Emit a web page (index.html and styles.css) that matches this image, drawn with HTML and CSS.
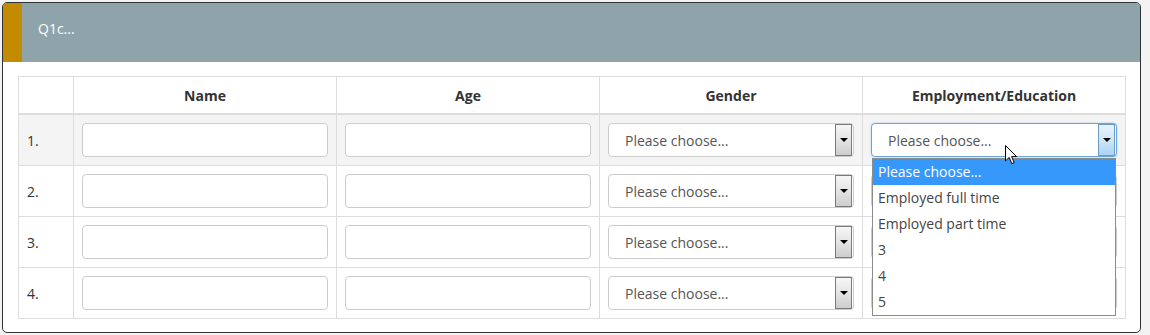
FILE: index.html
```html
<!doctype html>
<html>
 <head>
  <link rel="stylesheet" href="styles.css">
 </head>
 <body>
  <div class="panel">
   <div class="panel-head">
    <div class="stripe"></div>
    <div class="title">Q1c...</div>
   </div>
   <div class="panel-body">
    <table class="grid">
     <thead>
      <tr>
       <th class="num"></th>
       <th>Name</th>
       <th>Age</th>
       <th>Gender</th>
       <th>Employment/Education</th>
      </tr>
     </thead>
     <tbody>
      <tr class="odd">
       <td class="num">1.</td>
       <td><div class="field"></div></td>
       <td><div class="field"></div></td>
       <td><div class="pick"><span>Please choose...</span><i class="arrow"></i></div></td>
       <td class="open-cell">
        <div class="pick focus"><span>Please choose...</span><i class="arrow"></i></div>
        <ul class="menu">
         <li class="on">Please choose...</li>
         <li>Employed full time</li>
         <li>Employed part time</li>
         <li>3</li>
         <li>4</li>
         <li>5</li>
        </ul>
        <svg class="cursor" width="13" height="20" viewBox="0 0 13 20"><path d="M0.5 0.5 L0.5 16 L4.2 12.4 L6.8 18.6 L9.2 17.6 L6.6 11.6 L11.6 11.6 Z" fill="#fff" stroke="#000" stroke-width="1"/></svg>
       </td>
      </tr>
      <tr>
       <td class="num">2.</td>
       <td><div class="field"></div></td>
       <td><div class="field"></div></td>
       <td><div class="pick"><span>Please choose...</span><i class="arrow"></i></div></td>
       <td><div class="pick"><span>Please choose...</span><i class="arrow"></i></div></td>
      </tr>
      <tr>
       <td class="num">3.</td>
       <td><div class="field"></div></td>
       <td><div class="field"></div></td>
       <td><div class="pick"><span>Please choose...</span><i class="arrow"></i></div></td>
       <td><div class="pick"><span>Please choose...</span><i class="arrow"></i></div></td>
      </tr>
      <tr>
       <td class="num">4.</td>
       <td><div class="field"></div></td>
       <td><div class="field"></div></td>
       <td><div class="pick"><span>Please choose...</span><i class="arrow"></i></div></td>
       <td><div class="pick"><span>Please choose...</span><i class="arrow"></i></div></td>
      </tr>
     </tbody>
    </table>
   </div>
  </div>
 </body>
</html>
```
FILE: styles.css
```css
body {
    margin: 0;
    padding: 2px;
    background-color: #f3f3f3;
    font-family: "Open Sans", "DejaVu Sans", sans-serif;
    font-size: 14px;
    color: #333;
}
.panel {
    width: 1139px;
    height: 331px;
    box-sizing: border-box;
    border: 1px solid #2f3336;
    border-radius: 5px;
    background-color: #fff;
    overflow: hidden;
}
.panel-head {
    display: flex;
    height: 59px;
    background-color: #8fa3aa;
}
.stripe {
    width: 19px;
    background-color: #c38c00;
}
.title {
    padding: 16px 0 0 16px;
    color: #fff;
    font-size: 14px;
}
.panel-body {
    padding: 14px 14px 0 15px;
}
.grid {
    border-collapse: collapse;
    width: 1108px;
    table-layout: fixed;
}
.grid th,
.grid td {
    border: 1px solid #dddddd;
    padding: 0 8px 0 8px;
}
.grid th {
    height: 36px;
    font-weight: bold;
    text-align: center;
    color: #333;
    border-bottom-width: 2px;
}
.grid th.num {
    width: 38px;
}
.grid td {
    height: 50px;
}
.grid td.num {
    color: #333;
}
.odd td {
    background-color: #f4f4f4;
}
.field {
    height: 34px;
    box-sizing: border-box;
    border: 1px solid #cccccc;
    border-radius: 4px;
    background-color: #fff;
}
.pick {
    display: flex;
    align-items: center;
    height: 34px;
    box-sizing: border-box;
    border: 1px solid #cccccc;
    border-radius: 4px;
    background-color: #fff;
    padding: 1px 1px 1px 16px;
    color: #555;
}
.pick span {
    flex: 1;
}
.arrow {
    position: relative;
    width: 15px;
    height: 30px;
    border: 1px solid #7a7a7a;
    background: linear-gradient(#f6f6f6, #e4e4e4 50%, #cdcdcd);
}
.arrow::after {
    content: "";
    position: absolute;
    left: 4px;
    top: 13px;
    border-left: 4px solid transparent;
    border-right: 4px solid transparent;
    border-top: 4px solid #000;
}
.pick.focus {
    border-color: #6aa6dc;
    box-shadow: 0 0 2px rgba(102, 175, 233, 0.6);
}
.pick.focus .arrow {
    border-color: #6c9cc6;
    background: linear-gradient(#e8f3fc, #cfe6f8 50%, #a9d3f3);
}
.open-cell {
    position: relative;
}
.menu {
    position: absolute;
    left: 9px;
    top: 43px;
    width: 244px;
    box-sizing: border-box;
    margin: 0;
    padding: 0;
    list-style: none;
    border: 1px solid #8c8c8c;
    background-color: #fff;
    z-index: 2;
}
.menu li {
    height: 26px;
    line-height: 26px;
    padding-left: 5px;
    color: #444;
}
.menu li.on {
    background-color: #3798fb;
    color: #fff;
}
.cursor {
    position: absolute;
    left: 142px;
    top: 30px;
    z-index: 3;
}
```
